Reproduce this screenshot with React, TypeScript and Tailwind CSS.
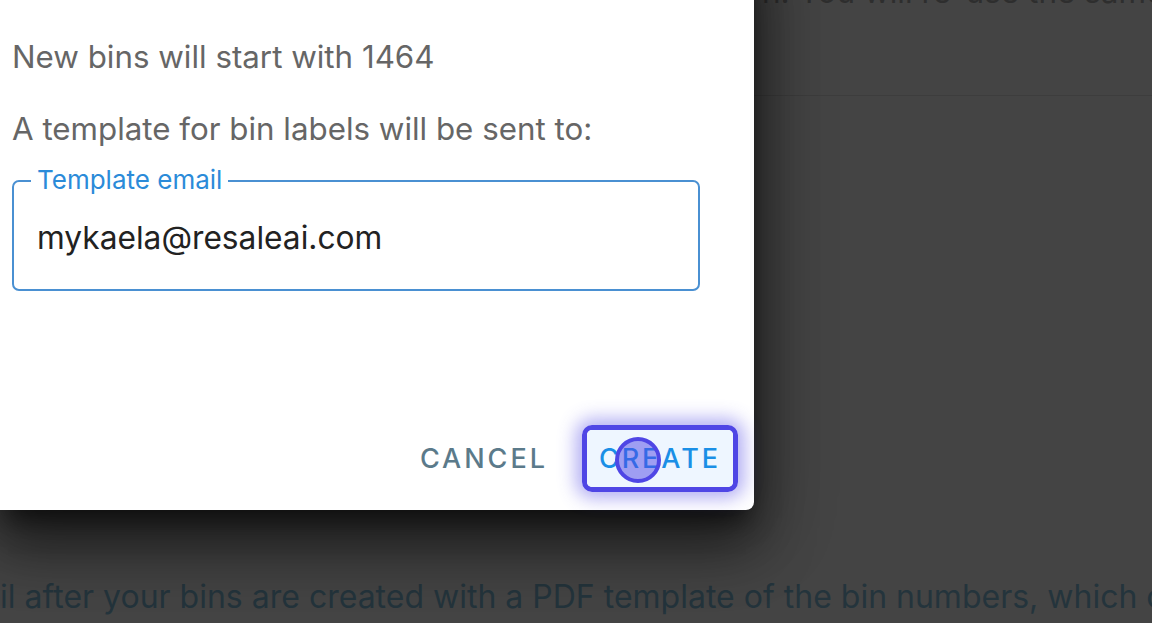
export default function App() {
  return (
    <div className="relative w-[1152px] h-[623px] overflow-hidden bg-[#444444] font-['Inter',sans-serif]">
      {/* page behind the dimmed backdrop */}
      <div className="flex flex-col h-full">
        <p className="-mt-[28px] pl-[762px] whitespace-nowrap text-[31.5px] leading-[40px] text-[#2e2e2e]">
          n. You will re-use the same bin numbers
        </p>
        <div className="mt-[83px] h-px bg-[#3d3d3d]" />
        <p className="mt-auto mb-[6px] whitespace-nowrap text-[32px] leading-[40px] text-[#24343c]">
          il after your bins are created with a PDF template of the bin numbers, which can be printed
        </p>
      </div>

      {/* dialog */}
      <div className="absolute left-0 top-[-60px] w-[754px] h-[570px] bg-white rounded-br-lg shadow-[0_16px_24px_-8px_rgba(0,0,0,0.6),0_36px_56px_4px_rgba(0,0,0,0.4),0_14px_70px_12px_rgba(0,0,0,0.3)] flex flex-col">
        <div className="pt-[97px] pl-[12px] pr-[56px] flex flex-col">
          <p className="text-[31.3px] leading-[40px] text-[#666666]">New bins will start with 1464</p>
          <p className="mt-[32px] text-[31.3px] leading-[40px] text-[#666666]">A template for bin labels will be sent to:</p>

          <div className="relative mt-[31px] w-[688px] h-[111px] border-2 border-[#4a90d2] rounded-[7px] flex items-center px-[23px] pt-[4px]">
            <span className="absolute -top-[19px] left-[17px] bg-white px-[6px] text-[26px] leading-[34px] text-[#2b8bd9]">
              Template email
            </span>
            <span className="text-[31.7px] leading-[40px] text-[#222222]">mykaela@resaleai.com</span>
          </div>
        </div>

        <div className="mt-auto mb-[18px] mr-[16px] flex items-center justify-end gap-[34px]">
          <button className="text-[27px] leading-[36px] font-medium tracking-[0.11em] text-[#5b7a8a] uppercase">
            Cancel
          </button>
          <div className="relative rounded-[10px] border-[5px] border-[#4f46e5] shadow-[0_0_18px_6px_rgba(79,70,229,0.45)]">
            <button className="px-[12px] h-[57px] rounded-[5px] bg-[#eef6ff] text-[27px] leading-[36px] font-medium tracking-[0.11em] text-[#1a8fe6] uppercase">
              Create
            </button>
            {/* click indicator */}
            <span className="absolute left-[28px] top-[7px] w-[46px] h-[46px] rounded-full border-[4px] border-[#4f46e5] bg-[#4f46e5]/50" />
          </div>
        </div>
      </div>
    </div>
  );
}
